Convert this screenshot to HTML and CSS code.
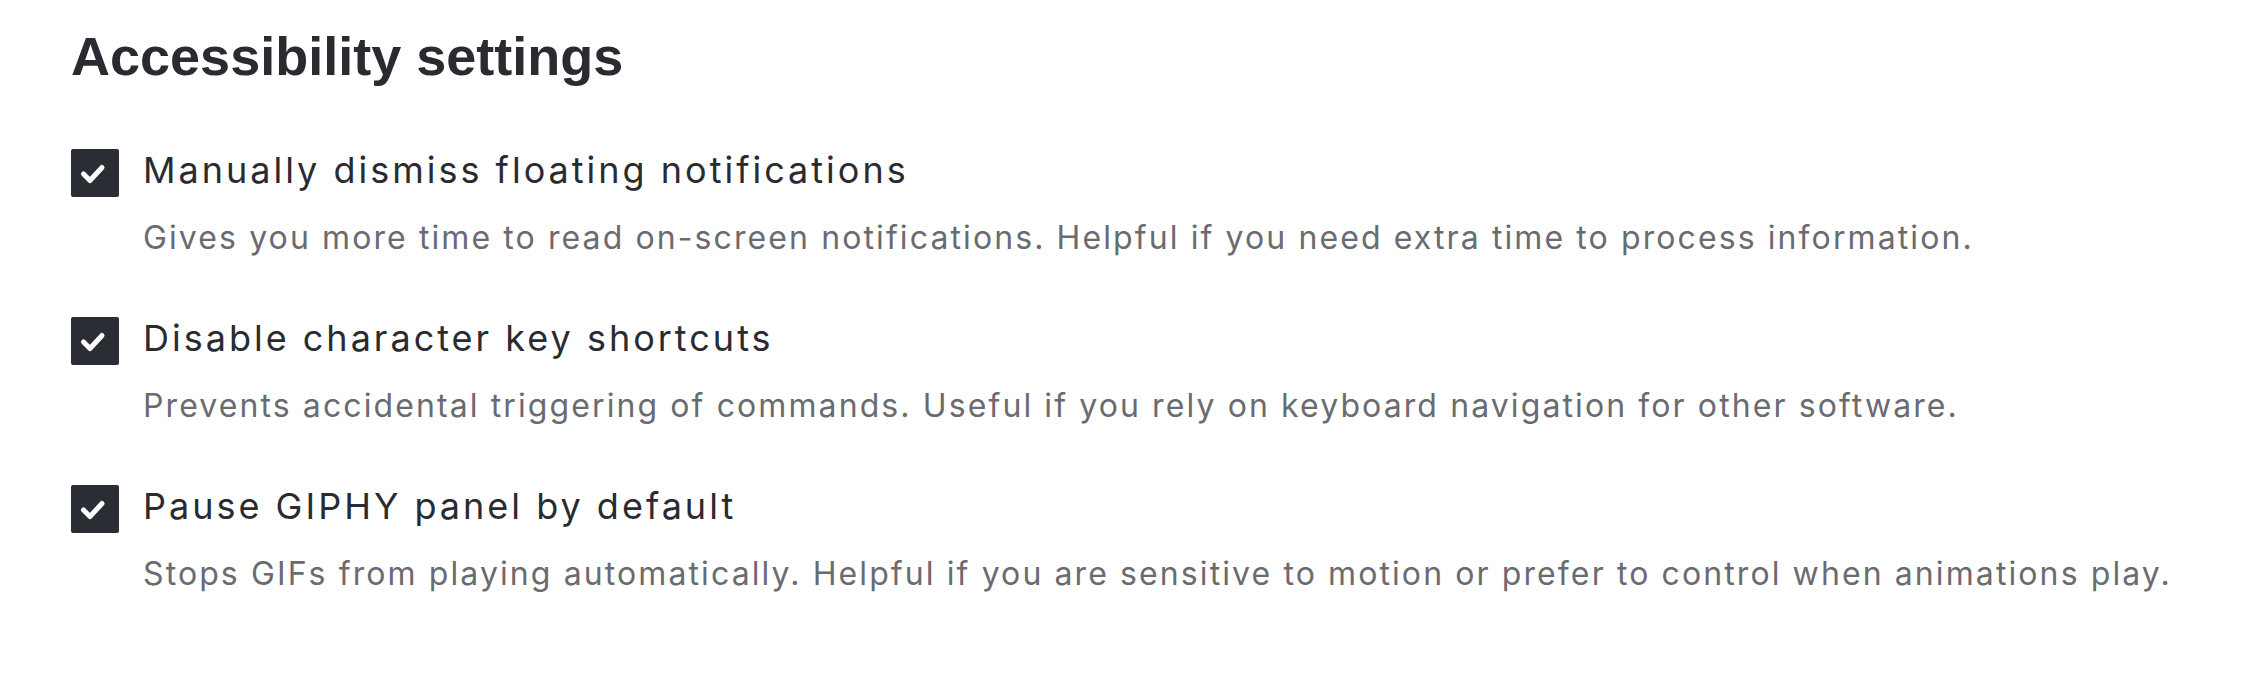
FILE: index.html
```html
<!DOCTYPE html>
<html lang="en">
<head>
<meta charset="utf-8">
<title>Accessibility settings</title>
<link rel="stylesheet" href="styles.css">
</head>
<body>
<main class="page">
  <h1 class="heading">Accessibility settings</h1>
  <ul class="options">
    <li class="option">
      <span class="checkbox" role="checkbox" aria-checked="true">
        <svg viewBox="0 0 48 48" width="48" height="48" aria-hidden="true"><path d="M12.5 25 L19 31.5 L31 18.5" fill="none" stroke="#fff" stroke-width="5" stroke-linecap="round" stroke-linejoin="round"/></svg>
      </span>
      <div class="option-text">
        <div class="option-title">Manually dismiss floating notifications</div>
        <div class="option-desc">Gives you more time to read on-screen notifications. Helpful if you need extra time to process information.</div>
      </div>
    </li>
    <li class="option">
      <span class="checkbox" role="checkbox" aria-checked="true">
        <svg viewBox="0 0 48 48" width="48" height="48" aria-hidden="true"><path d="M12.5 25 L19 31.5 L31 18.5" fill="none" stroke="#fff" stroke-width="5" stroke-linecap="round" stroke-linejoin="round"/></svg>
      </span>
      <div class="option-text">
        <div class="option-title">Disable character key shortcuts</div>
        <div class="option-desc">Prevents accidental triggering of commands. Useful if you rely on keyboard navigation for other software.</div>
      </div>
    </li>
    <li class="option">
      <span class="checkbox" role="checkbox" aria-checked="true">
        <svg viewBox="0 0 48 48" width="48" height="48" aria-hidden="true"><path d="M12.5 25 L19 31.5 L31 18.5" fill="none" stroke="#fff" stroke-width="5" stroke-linecap="round" stroke-linejoin="round"/></svg>
      </span>
      <div class="option-text">
        <div class="option-title">Pause GIPHY panel by default</div>
        <div class="option-desc">Stops GIFs from playing automatically. Helpful if you are sensitive to motion or prefer to control when animations play.</div>
      </div>
    </li>
  </ul>
</main>
</body>
</html>
```

FILE: styles.css
```css
html, body {
  margin: 0;
  padding: 0;
  background: #ffffff;
}

.page {
  padding: 23px 0 0 71px;
  font-family: Inter, "Noto Sans", sans-serif;
  color: #2a2b31;
}

.heading {
  margin: 0 0 56px 0;
  font-family: "Liberation Sans", Arial, sans-serif;
  font-size: 54px;
  line-height: 67px;
  font-weight: 700;
  color: #2a2b31;
}

.options {
  list-style: none;
  margin: 0;
  padding: 0;
  display: flex;
  flex-direction: column;
  gap: 52px;
}

.option {
  display: flex;
  align-items: flex-start;
  gap: 24px;
}

.checkbox {
  flex: none;
  width: 48px;
  height: 48px;
  margin-top: 3px;
  background: #2b2d34;
  border-radius: 2px;
  display: flex;
}

.checkbox svg {
  display: block;
}

.option-text {
  display: flex;
  flex-direction: column;
  gap: 20px;
  white-space: nowrap;
}

.option-title {
  font-size: 36px;
  line-height: 48px;
  letter-spacing: 3px;
  color: #2a2b31;
}

.option-desc {
  font-size: 32px;
  line-height: 48px;
  letter-spacing: 2.1px;
  color: #6a6b71;
}
```
